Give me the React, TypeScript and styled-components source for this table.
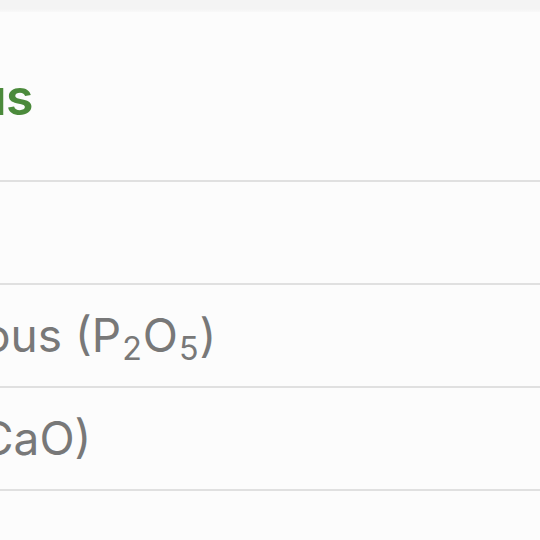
import React from "react";
import styled, { createGlobalStyle } from "styled-components";

const GlobalStyle = createGlobalStyle`
  html, body {
    margin: 0;
    padding: 0;
    background: #fcfcfc;
    overflow: hidden;
  }
  body {
    font-family: Inter, "Liberation Sans", Arial, sans-serif;
  }
`;

const Screen = styled.div`
  width: 540px;
  height: 540px;
  overflow: hidden;
  background: #fcfcfc;
  display: flex;
  flex-direction: column;
`;

const TopBar = styled.div`
  height: 12px;
  flex-shrink: 0;
  background: linear-gradient(#f4f4f4 0, #f4f4f4 9px, #f9f9f9 12px);
`;

const Header = styled.div`
  height: 168px;
  flex-shrink: 0;
  display: flex;
  align-items: center;
  overflow: hidden;
  padding-top: 2px;
  box-sizing: border-box;
`;

const Title = styled.h1`
  margin: 0 0 0 -24px;
  font-size: 50px;
  font-weight: 600;
  letter-spacing: -0.5px;
  color: #4b8a3b;
  white-space: nowrap;
`;

const List = styled.div`
  display: flex;
  flex-direction: column;
  border-top: 2px solid #e0e0e0;
`;

const Row = styled.div`
  height: 103px;
  flex-shrink: 0;
  display: flex;
  align-items: center;
  overflow: hidden;
  border-bottom: 2px solid #e0e0e0;
  padding-bottom: 2px;
  box-sizing: border-box;
`;

const Label = styled.span<{ $shift?: number }>`
  margin-left: ${(p) => p.$shift ?? 0}px;
  font-size: 46px;
  font-weight: 400;
  color: #787878;
  white-space: nowrap;
`;

const Sub = styled.sub`
  font-size: 0.7em;
  vertical-align: -0.26em;
  line-height: 0;
  margin: 0 1px;
`;

const rows: { label?: React.ReactNode; shift?: number }[] = [
  {},
  {
    label: (
      <>
        ous (P<Sub>2</Sub>O<Sub>5</Sub>)
      </>
    ),
    shift: -17,
  },
  { label: "CaO)", shift: -20 },
  {},
];

const App: React.FC = () => {
  return (
    <Screen>
      <GlobalStyle />
      <TopBar />
      <Header>
        <Title>us</Title>
      </Header>
      <List>
        {rows.map((r, i) => (
          <Row key={i}>
            {r.label && <Label $shift={r.shift}>{r.label}</Label>}
          </Row>
        ))}
      </List>
    </Screen>
  );
};

export default App;
